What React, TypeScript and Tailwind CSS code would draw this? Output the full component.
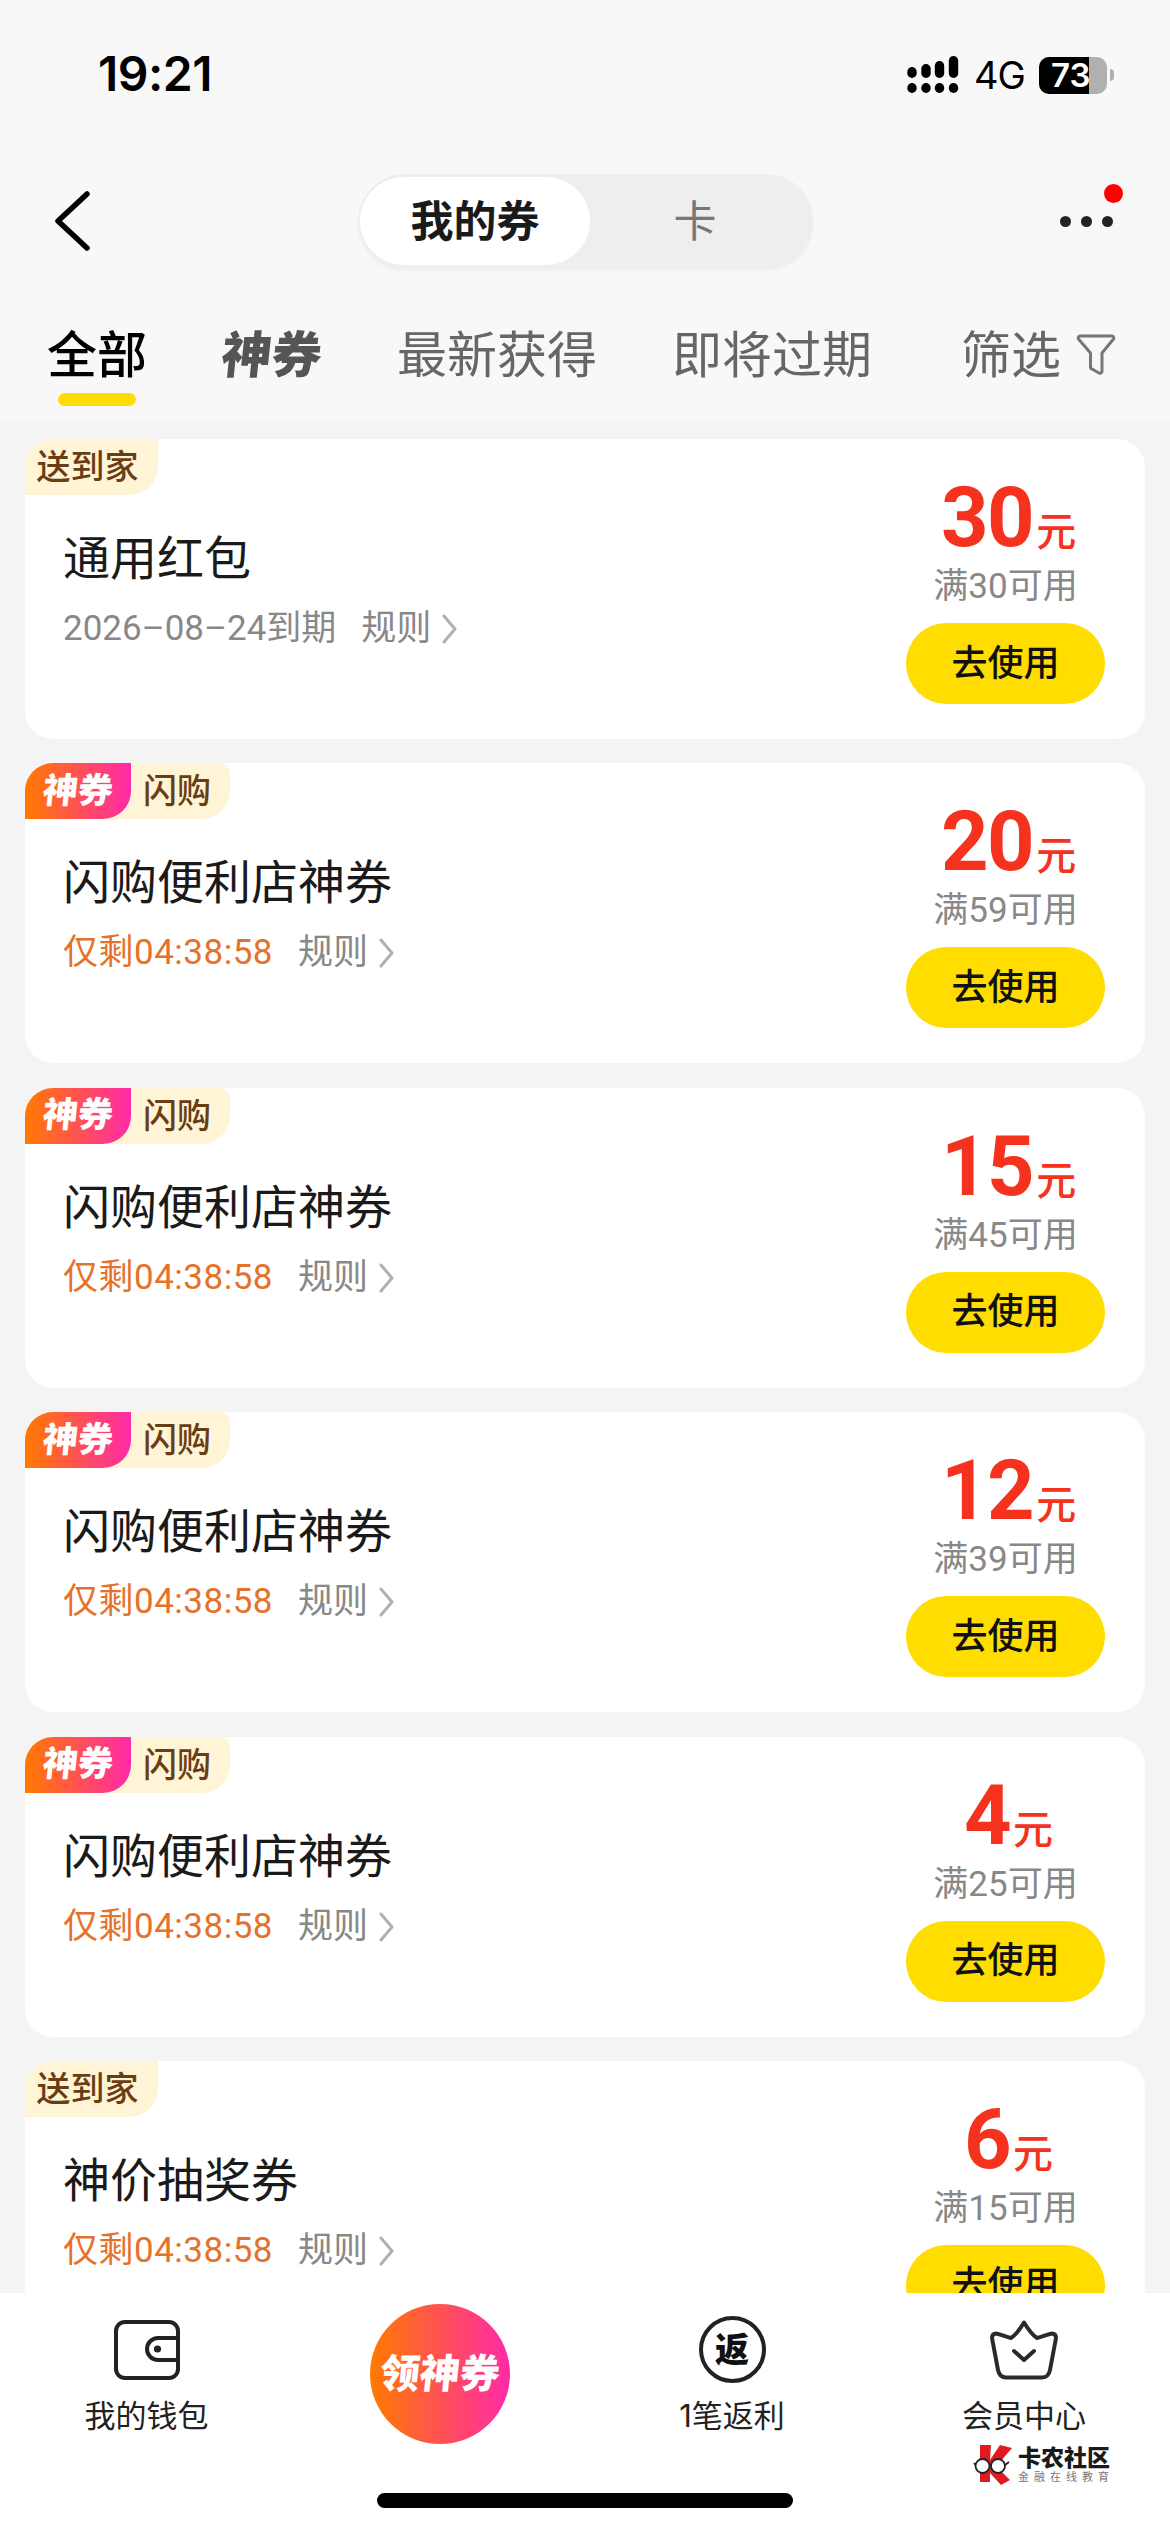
import React from "react";

const FONT = "font-['Inter','Noto_Sans_CJK_SC',sans-serif]";
const NUM = "font-['Roboto','Noto_Sans_CJK_SC',sans-serif]";

function Chevron({ className }: { className?: string }) {
  return (
    <svg className={className} width="15" height="30" viewBox="0 0 15 30" fill="none">
      <path d="M2 2 L13 15 L2 28" stroke="#b0b0b0" strokeWidth="3" strokeLinecap="round" strokeLinejoin="round" />
    </svg>
  );
}

function Signal() {
  const xs = [912, 926, 939.5, 953.5];
  const tops = [67, 64, 61, 56];
  return (
    <svg width="52" height="40" viewBox="907 55 52 40">
      {xs.map((x, i) => (
        <g key={x} fill="#000">
          <rect x={x - 4.7} y={tops[i]} width="9.4" height={78 - tops[i]} rx="4.7" />
          <rect x={x - 4.7} y="83" width="9.4" height="10" rx="4.7" />
        </g>
      ))}
    </svg>
  );
}

function StatusBar() {
  return (
    <div className="h-[148px] flex items-start pt-[53px] pl-[98px] relative">
      <div className="w-[115px] text-[48px] leading-[42px] font-semibold text-black tracking-[-0.5px]">19:21</div>
      <div className="ml-[694px] flex items-center h-[40px] mt-[2px]">
        <Signal />
        <div className="ml-[15px] text-[38px] leading-[40px] text-black font-normal w-[50px] tracking-[-1px]">4G</div>
        <div className="ml-[15px] relative w-[68px] h-[37px]">
          <div className="absolute inset-0 rounded-[10px] overflow-hidden bg-[#b0b0b0]">
            <div className="w-[50px] h-full bg-black" />
          </div>
          <div className="absolute left-[12px] top-0 h-full flex items-center text-[33px] leading-[37px] font-semibold text-white">
            73
          </div>
        </div>
        <div className="ml-[3px] w-[4px] h-[12px] rounded-r-full bg-[#b0b0b0]" />
      </div>
    </div>
  );
}

function NavRow() {
  return (
    <div className="h-[146px] flex items-center relative">
      <svg className="ml-[54px]" width="36" height="60" viewBox="0 0 36 60" fill="none">
        <path d="M33 3 L4 30 L33 57" stroke="#000" strokeWidth="5.5" strokeLinecap="round" strokeLinejoin="round" />
      </svg>
      <div className="ml-[268px] w-[455px] h-[94px] rounded-full bg-[#eeeeee] shadow-[0_3px_3px_rgba(0,0,0,0.04)] flex items-center pl-[2px]">
        <div className="w-[230px] h-[88px] rounded-full bg-white flex items-center justify-center text-[43px] leading-none font-bold text-[#1a1a1a]">
          我的券
        </div>
        <div className="w-[210px] flex items-center justify-center text-[43px] leading-none text-[#777777]">卡</div>
      </div>
      <div className="absolute left-[1059.5px] top-[67.5px] flex gap-[10px]">
        <div className="w-[11px] h-[11px] rounded-full bg-[#222222]" />
        <div className="w-[11px] h-[11px] rounded-full bg-[#222222]" />
        <div className="w-[11px] h-[11px] rounded-full bg-[#222222]" />
      </div>
      <div className="absolute left-[1104px] top-[36px] w-[19px] h-[19px] rounded-full bg-[#ff0000]" />
    </div>
  );
}

function Tabs() {
  return (
    <div className="h-[126px] relative flex items-start pl-[47px] pt-[32px] gap-[75px] text-[50px] leading-[58px] text-[#666666]">
      <div className="w-[100px] font-medium text-black relative">
        全部
        <div className="absolute left-[11px] top-[67px] w-[78px] h-[13px] rounded-full bg-[#ffdd00]" />
      </div>
      <div className="w-[100px] font-black text-[#555555] -skew-x-6 whitespace-nowrap">神券</div>
      <div className="w-[200px] whitespace-nowrap">最新获得</div>
      <div className="w-[200px] whitespace-nowrap">即将过期</div>
      <div className="ml-[14px] flex items-center">
        <span className="w-[100px] whitespace-nowrap">筛选</span>
        <svg className="ml-[15px]" width="40" height="42" viewBox="0 0 40 42" fill="none">
          <path
            d="M4 2 H36 A2 2 0 0 1 37.5 5 L26 19 V37 A2 2 0 0 1 23 39 L16 35 A2 2 0 0 1 14.5 33 V19 L2.5 5 A2 2 0 0 1 4 2 Z"
            stroke="#777777"
            strokeWidth="3"
            strokeLinejoin="round"
          />
        </svg>
      </div>
    </div>
  );
}

type Coupon = {
  kind: "home" | "flash";
  title: string;
  date?: string;
  amount: string;
  min: string;
};

const coupons: Coupon[] = [
  { kind: "home", title: "通用红包", date: "2026–08–24到期", amount: "30", min: "满30可用" },
  { kind: "flash", title: "闪购便利店神券", amount: "20", min: "满59可用" },
  { kind: "flash", title: "闪购便利店神券", amount: "15", min: "满45可用" },
  { kind: "flash", title: "闪购便利店神券", amount: "12", min: "满39可用" },
  { kind: "flash", title: "闪购便利店神券", amount: "4", min: "满25可用" },
  { kind: "home", title: "神价抽奖券", amount: "6", min: "满15可用" },
];

function Badge({ kind }: { kind: Coupon["kind"] }) {
  if (kind === "home") {
    return (
      <div className="absolute left-0 top-0 h-[56px] w-[133px] pr-[8px] bg-[#fff5d6] rounded-tl-[28px] rounded-br-[28px] flex items-center justify-center text-[34px] leading-none font-medium text-[#6b3d14]">
        送到家
      </div>
    );
  }
  return (
    <div className="absolute left-0 top-0 h-[56px] w-[205px] bg-[#fff5d6] rounded-tl-[28px] rounded-tr-[10px] rounded-br-[28px] flex items-center text-[34px] leading-none font-medium text-[#6b3d14]">
      <div className="w-[106px] h-full bg-linear-to-r/srgb from-[#ff7a00] to-[#ff2aa8] rounded-tl-[28px] rounded-br-[28px] flex items-center justify-center text-white font-black text-[35px]">
        <span className="-skew-x-6 whitespace-nowrap">神券</span>
      </div>
      <div className="ml-[12px]">闪购</div>
    </div>
  );
}

function Card({ c }: { c: Coupon }) {
  return (
    <div className={`relative shrink-0 h-[300px] mx-[25px] bg-white rounded-[28px] flex justify-between ${NUM}`}>
      <Badge kind={c.kind} />
      <div className="pl-[38px] pt-[92px]">
        <div className="text-[47px] leading-[56px] text-[#1a1a1a] whitespace-nowrap">{c.title}</div>
        <div className="mt-[22px] flex items-center h-[40px] text-[35px] leading-[40px]">
          {c.date ? (
            <span className="text-[#888888] mr-[25px]">{c.date}</span>
          ) : (
            <span className="text-[#e5722a] tracking-[0.5px] mr-[25px]">仅剩04:38:58</span>
          )}
          <span className="text-[#888888]">规则</span>
          <Chevron className="ml-[11px]" />
        </div>
      </div>
      <div className="w-[199px] mr-[40px] pt-[39px] flex flex-col items-center">
        <div className="flex items-baseline justify-center h-[80px] pl-[6px]">
          <span className="text-[83px] leading-[80px] font-bold text-[#f5321e] tracking-[-1.5px]">{c.amount}</span>
          <span className="ml-[3px] text-[40px] leading-[40px] font-medium text-[#f5321e]">元</span>
        </div>
        <div className="mt-[8px] text-[35px] leading-[42px] text-[#888888] whitespace-nowrap">{c.min}</div>
        <div className="mt-[15px] w-[199px] h-[81px] shrink-0 rounded-full bg-[#ffdd00] flex items-center justify-center text-[36px] leading-none font-medium text-[#111111]">
          去使用
        </div>
      </div>
    </div>
  );
}

function WalletIcon() {
  return (
    <svg width="68" height="62" viewBox="0 0 68 62" fill="none" stroke="#222222" strokeWidth="4">
      <rect x="3" y="3" width="62" height="56" rx="9" />
      <path d="M65 19 H45 A11 11 0 0 0 45 41 H65" />
      <circle cx="44.5" cy="30" r="3.6" fill="#222222" stroke="none" />
    </svg>
  );
}

function CrownIcon() {
  return (
    <svg width="68" height="60" viewBox="0 0 68 60" fill="none" stroke="#2a2a2a" strokeWidth="4" strokeLinejoin="round" strokeLinecap="round">
      <path d="M34 2.5 C38 9 42 15 47 18 C52 17 58 14 62 13.5 C65 13.5 66 15 66 18 L60 50 C59 55 57 57.5 52 57.5 H16 C11 57.5 9 55 8 50 L2 18 C2 15 3 13.5 6 13.5 C10 14 16 17 21 18 C26 15 30 9 34 2.5 Z" />
      <path d="M24 31 L34 40 L44 31" />
    </svg>
  );
}

function KLogo() {
  return (
    <svg width="42" height="42" viewBox="0 0 42 42" fill="none">
      <path d="M7 1 H18 L17 16 L27 1 L39 4 L27 18 L26 25 L37 36 L28 41 L17 29 L17 38 L7 38 Z" fill="#e01b1f" />
      <circle cx="9.5" cy="22" r="7" fill="#fff" stroke="#222" strokeWidth="1.8" />
      <circle cx="25" cy="22" r="7" fill="#fff" stroke="#222" strokeWidth="1.8" />
      <path d="M16 21 H19 M2.5 21 L1 19 M32 21 L36 18" stroke="#222" strokeWidth="1.8" />
    </svg>
  );
}

function BottomNav() {
  return (
    <div className="h-[239px] shrink-0 bg-white relative">
      <div className="grid grid-cols-[292px_292px_292px_292px] pl-[2px] h-full text-[31px] leading-[36px] text-[#222222]">
        <div className="flex flex-col items-center pt-[26px] pr-[3px]">
          <div className="h-[62px] flex items-center"><WalletIcon /></div>
          <div className="mt-[17px] whitespace-nowrap">我的钱包</div>
        </div>
        <div className="flex flex-col items-center pt-[11px]">
          <div className="w-[140px] h-[140px] rounded-full bg-linear-to-r/srgb from-[#ff7a00] to-[#ff2aa8] flex items-center justify-center text-white font-black text-[40px] leading-none">
            <span className="-skew-x-6 whitespace-nowrap">领神券</span>
          </div>
        </div>
        <div className="flex flex-col items-center pt-[23px]">
          <div className="w-[67px] h-[67px] rounded-full border-[4px] border-[#222222] flex items-center justify-center text-[34px] leading-none font-black text-[#111111]">
            返
          </div>
          <div className="mt-[15px] whitespace-nowrap">1笔返利</div>
        </div>
        <div className="flex flex-col items-center pt-[27px]">
          <div className="h-[60px]"><CrownIcon /></div>
          <div className="mt-[18px] whitespace-nowrap">会员中心</div>
        </div>
      </div>
      <div className="absolute left-[973px] top-[151px] flex items-center">
        <KLogo />
        <div className="ml-[3px] flex flex-col">
          <span className="text-[23px] leading-[24px] font-black text-[#1a1a1a] whitespace-nowrap">卡农社区</span>
          <span className="text-[11px] leading-[13px] mt-[1px] tracking-[5px] text-[#777777] whitespace-nowrap">金融在线教育</span>
        </div>
      </div>
      <div className="absolute left-[377px] top-[200px] w-[416px] h-[15px] rounded-full bg-black" />
    </div>
  );
}

export default function App() {
  return (
    <div className={`w-[1170px] h-[2532px] overflow-hidden flex flex-col bg-[#f8f8f8] ${FONT}`}>
      <StatusBar />
      <NavRow />
      <Tabs />
      <div className="flex-1 min-h-0 overflow-hidden bg-[#f4f4f4] pt-[19px] flex flex-col gap-[24.4px]">
        {coupons.map((c, i) => (
          <Card key={i} c={c} />
        ))}
      </div>
      <BottomNav />
    </div>
  );
}
